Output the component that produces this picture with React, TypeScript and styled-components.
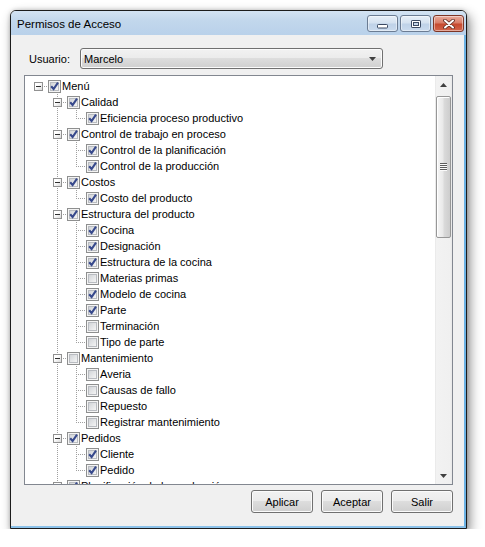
import React from "react";
import styled, { createGlobalStyle } from "styled-components";

const GlobalStyle = createGlobalStyle`
  html, body {
    margin: 0;
    padding: 0;
    background: #ffffff;
  }
  body {
    font-family: "Liberation Sans", Arial, sans-serif;
    font-size: 11px;
    color: #000000;
  }
`;

interface TreeNode {
  label: string;
  checked: boolean;
  collapsed?: boolean;
  children?: TreeNode[];
}

const leaf = (label: string, checked: boolean): TreeNode => ({ label, checked });

const menu: TreeNode = {
  label: "Menú",
  checked: true,
  children: [
    { label: "Calidad", checked: true, children: [leaf("Eficiencia proceso productivo", true)] },
    {
      label: "Control de trabajo en proceso",
      checked: true,
      children: [leaf("Control de la planificación", true), leaf("Control de la producción", true)],
    },
    { label: "Costos", checked: true, children: [leaf("Costo del producto", true)] },
    {
      label: "Estructura del producto",
      checked: true,
      children: [
        leaf("Cocina", true),
        leaf("Designación", true),
        leaf("Estructura de la cocina", true),
        leaf("Materias primas", false),
        leaf("Modelo de cocina", true),
        leaf("Parte", true),
        leaf("Terminación", false),
        leaf("Tipo de parte", false),
      ],
    },
    {
      label: "Mantenimiento",
      checked: false,
      children: [
        leaf("Averia", false),
        leaf("Causas de fallo", false),
        leaf("Repuesto", false),
        leaf("Registrar mantenimiento", false),
      ],
    },
    { label: "Pedidos", checked: true, children: [leaf("Cliente", true), leaf("Pedido", true)] },
    {
      label: "Planificación de la producción",
      checked: true,
      collapsed: true,
      children: [leaf("Orden de producción", true)],
    },
  ],
};

interface FlatRow {
  node: TreeNode;
  guides: boolean[];
  isLast: boolean;
  isRoot: boolean;
}

const flatten = (node: TreeNode, guides: boolean[], isLast: boolean, isRoot: boolean, out: FlatRow[]) => {
  out.push({ node, guides, isLast, isRoot });
  const kids = node.collapsed ? [] : node.children ?? [];
  kids.forEach((child, i) => flatten(child, [...guides, !isLast], i === kids.length - 1, false, out));
  return out;
};

const rows = flatten(menu, [], true, true, []);

const dots = "repeating-linear-gradient(to bottom, #a0a0a0 0 1px, transparent 1px 2px)";
const hdots = "repeating-linear-gradient(to right, #a0a0a0 0 1px, transparent 1px 2px)";

const Window = styled.div`
  margin: 10px 0 0 10px;
  width: 457px;
  height: 519px;
  box-sizing: border-box;
  border: 1px solid #1c1c1c;
  border-radius: 6px 6px 0 0;
  display: flex;
  flex-direction: column;
  background: #f0f0f0;
  box-shadow: 3px 5px 12px rgba(0, 0, 0, 0.45), 0 0 4px rgba(0, 0, 0, 0.2);
  overflow: hidden;
`;

const TitleBar = styled.div`
  height: 24px;
  flex-shrink: 0;
  display: flex;
  align-items: flex-start;
  padding: 0 2px 0 6px;
  background: linear-gradient(#d3e3f3 0%, #c2d7ec 40%, #b9d1ea 100%);
`;

const Title = styled.div`
  flex: 1;
  font-size: 11.5px;
  line-height: 24px;
  padding-top: 1px;
  color: #000;
`;

const CaptionButtons = styled.div`
  display: flex;
  gap: 2px;
  margin-top: 4px;
`;

const CaptionButton = styled.div<{ $close?: boolean }>`
  width: 31px;
  height: 17px;
  box-sizing: border-box;
  border: 1px solid ${(p) => (p.$close ? "#7d3525" : "#6b7c93")};
  border-radius: 3px;
  display: flex;
  align-items: center;
  justify-content: center;
  background: ${(p) =>
    p.$close
      ? "linear-gradient(#e9ab9c 0%, #d97e69 45%, #c64a2f 55%, #d3664d 100%)"
      : "linear-gradient(#e7eff8 0%, #d5e2f0 45%, #bfd2e8 55%, #cadbee 100%)"};
  box-shadow: inset 0 0 0 1px rgba(255, 255, 255, 0.45);
`;

const Client = styled.div`
  flex: 1;
  display: flex;
  flex-direction: column;
  padding: 13px 10px 13px 13px;
  border-right: 2px solid #6cb2e4;
  border-bottom: 2px solid #8cc2ea;
`;

const UserRow = styled.div`
  display: flex;
  align-items: center;
  height: 21px;
  padding-left: 5px;
`;

const Label = styled.span`
  width: 51px;
  flex-shrink: 0;
`;

const Combo = styled.div`
  width: 303px;
  height: 21px;
  box-sizing: border-box;
  border: 1px solid #707070;
  border-radius: 3px;
  display: flex;
  align-items: center;
  justify-content: space-between;
  padding: 0 6px 0 3px;
  background: linear-gradient(#f2f2f2 0%, #ebebeb 50%, #dddddd 50%, #cfcfcf 100%);
  box-shadow: inset 0 0 0 1px #fbfbfb;
`;

const Panel = styled.div`
  margin-top: 6px;
  width: 429px;
  height: 410px;
  box-sizing: border-box;
  border: 1px solid #828790;
  background: #ffffff;
  display: flex;
  overflow: hidden;
`;

const TreeArea = styled.div`
  flex: 1;
  overflow: hidden;
  padding: 2px 0 0 4px;
`;

const Row = styled.div`
  display: flex;
  height: 16px;
  white-space: nowrap;
`;

const Cell = styled.div`
  position: relative;
  width: 19px;
  height: 16px;
  flex-shrink: 0;
`;

const VLine = styled.span<{ $part: "full" | "top" | "bottom" }>`
  position: absolute;
  left: 9px;
  width: 1px;
  top: ${(p) => (p.$part === "bottom" ? "8px" : "0")};
  height: ${(p) => (p.$part === "full" ? "16px" : "8px")};
  background: ${dots};
`;

const HLine = styled.span`
  position: absolute;
  left: 9px;
  top: 8px;
  width: 10px;
  height: 1px;
  background: ${hdots};
`;

const Expander = styled.span`
  position: absolute;
  left: 5px;
  top: 4px;
  width: 9px;
  height: 9px;
  box-sizing: border-box;
  border: 1px solid #919191;
  background: linear-gradient(135deg, #ffffff 35%, #dadada 100%);

  &::after {
    content: "";
    position: absolute;
    left: 1px;
    top: 3px;
    width: 5px;
    height: 1px;
    background: #303030;
  }
`;

const CheckSvg = styled.svg`
  flex-shrink: 0;
  margin-top: 2px;
  display: block;
`;

const ItemText = styled.span`
  padding-left: 1px;
  line-height: 16px;
`;

const ScrollBar = styled.div`
  width: 17px;
  flex-shrink: 0;
  display: flex;
  flex-direction: column;
  align-items: center;
  background: linear-gradient(to right, #e3e3e3 0, #f2f2f2 1px, #f0f0f0 15px, #e8e8e8 17px);
`;

const ArrowButton = styled.div`
  width: 17px;
  height: 17px;
  flex-shrink: 0;
  display: flex;
  align-items: center;
  justify-content: center;
`;

const Thumb = styled.div`
  margin-top: 3px;
  width: 15px;
  height: 142px;
  box-sizing: border-box;
  border: 1px solid #979797;
  border-radius: 2px;
  background: linear-gradient(to right, #f6f6f6 0%, #e9e9e9 45%, #dadada 55%, #cdcdcd 100%);
  box-shadow: inset 1px 1px 0 #ffffff;
  display: flex;
  align-items: center;
  justify-content: center;
`;

const Grip = styled.span`
  width: 7px;
  height: 8px;
  background: repeating-linear-gradient(to bottom, #5c5c5c 0 1px, #fafafa 1px 2px);
`;

const Track = styled.div`
  flex: 1;
`;

const ButtonRow = styled.div`
  margin-top: 5px;
  display: flex;
  justify-content: flex-end;
  gap: 8px;
  padding-right: 1px;
`;

const Button = styled.button`
  width: 62px;
  height: 23px;
  padding: 0;
  box-sizing: border-box;
  font-family: "Liberation Sans", Arial, sans-serif;
  font-size: 11px;
  color: #000;
  border: 1px solid #707070;
  border-radius: 3px;
  background: linear-gradient(#f2f2f2 0%, #ebebeb 50%, #dddddd 50%, #cfcfcf 100%);
  box-shadow: inset 0 0 0 1px #fbfbfb;
`;

const CheckBox = ({ checked }: { checked: boolean }) => (
  <CheckSvg width={13} height={13} viewBox="0 0 13 13">
    <defs>
      <linearGradient id="cbInner" x1="0" y1="0" x2="1" y2="1">
        <stop offset="0" stopColor="#cfd2d6" />
        <stop offset="1" stopColor="#f7f7f7" />
      </linearGradient>
    </defs>
    <rect x={0.5} y={0.5} width={12} height={12} fill="#f4f4f4" stroke="#8e8f8f" />
    <rect x={2.5} y={2.5} width={8} height={8} fill="url(#cbInner)" stroke="#b9bcc1" />
    {checked && (
      <path d="M3.2 6.2 L5.6 9 L10 2.7" fill="none" stroke="#37498c" strokeWidth={2.1} strokeLinejoin="miter" />
    )}
  </CheckSvg>
);

const TreeRow = ({ row }: { row: FlatRow }) => (
  <Row>
    {row.guides.map((g, i) => (
      <Cell key={i}>{g && <VLine $part="full" />}</Cell>
    ))}
    <Cell>
      {!row.isRoot && <VLine $part="top" />}
      {!row.isLast && <VLine $part="bottom" />}
      <HLine />
      {row.node.children && <Expander />}
    </Cell>
    <CheckBox checked={row.node.checked} />
    <ItemText>{row.node.label}</ItemText>
  </Row>
);

const Arrow = ({ up }: { up?: boolean }) => (
  <svg width="7" height="4" viewBox="0 0 7 4">
    <polygon points={up ? "3.5,0 7,4 0,4" : "0,0 7,0 3.5,4"} fill="#404040" />
  </svg>
);

export default function App() {
  return (
    <>
      <GlobalStyle />
      <Window>
        <TitleBar>
          <Title>Permisos de Acceso</Title>
          <CaptionButtons>
            <CaptionButton>
              <svg width="11" height="5" viewBox="0 0 11 5" style={{ marginTop: 5 }}>
                <rect x={0.5} y={0.5} width={10} height={3.5} rx={0.8} fill="#ffffff" stroke="#3a4962" />
              </svg>
            </CaptionButton>
            <CaptionButton>
              <svg width="10" height="8" viewBox="0 0 10 8">
                <rect x={0.5} y={0.5} width={9} height={7} rx={0.6} fill="#ffffff" stroke="#3a4962" />
                <rect x={2.5} y={2.5} width={5} height={3} fill="#c5d6ea" stroke="#3a4962" />
              </svg>
            </CaptionButton>
            <CaptionButton $close>
              <svg width="12" height="10" viewBox="0 0 12 10">
                <path d="M2 1.5 L10 8.5 M10 1.5 L2 8.5" stroke="#5b2a20" strokeWidth={3.6} strokeLinecap="round" />
                <path d="M2 1.5 L10 8.5 M10 1.5 L2 8.5" stroke="#ffffff" strokeWidth={2} strokeLinecap="round" />
              </svg>
            </CaptionButton>
          </CaptionButtons>
        </TitleBar>
        <Client>
          <UserRow>
            <Label>Usuario:</Label>
            <Combo>
              <span>Marcelo</span>
              <Arrow />
            </Combo>
          </UserRow>
          <Panel>
            <TreeArea>
              {rows.map((r, i) => (
                <TreeRow key={i} row={r} />
              ))}
            </TreeArea>
            <ScrollBar>
              <ArrowButton>
                <Arrow up />
              </ArrowButton>
              <Thumb>
                <Grip />
              </Thumb>
              <Track />
              <ArrowButton>
                <Arrow />
              </ArrowButton>
            </ScrollBar>
          </Panel>
          <ButtonRow>
            <Button>Aplicar</Button>
            <Button>Aceptar</Button>
            <Button>Salir</Button>
          </ButtonRow>
        </Client>
      </Window>
    </>
  );
}
